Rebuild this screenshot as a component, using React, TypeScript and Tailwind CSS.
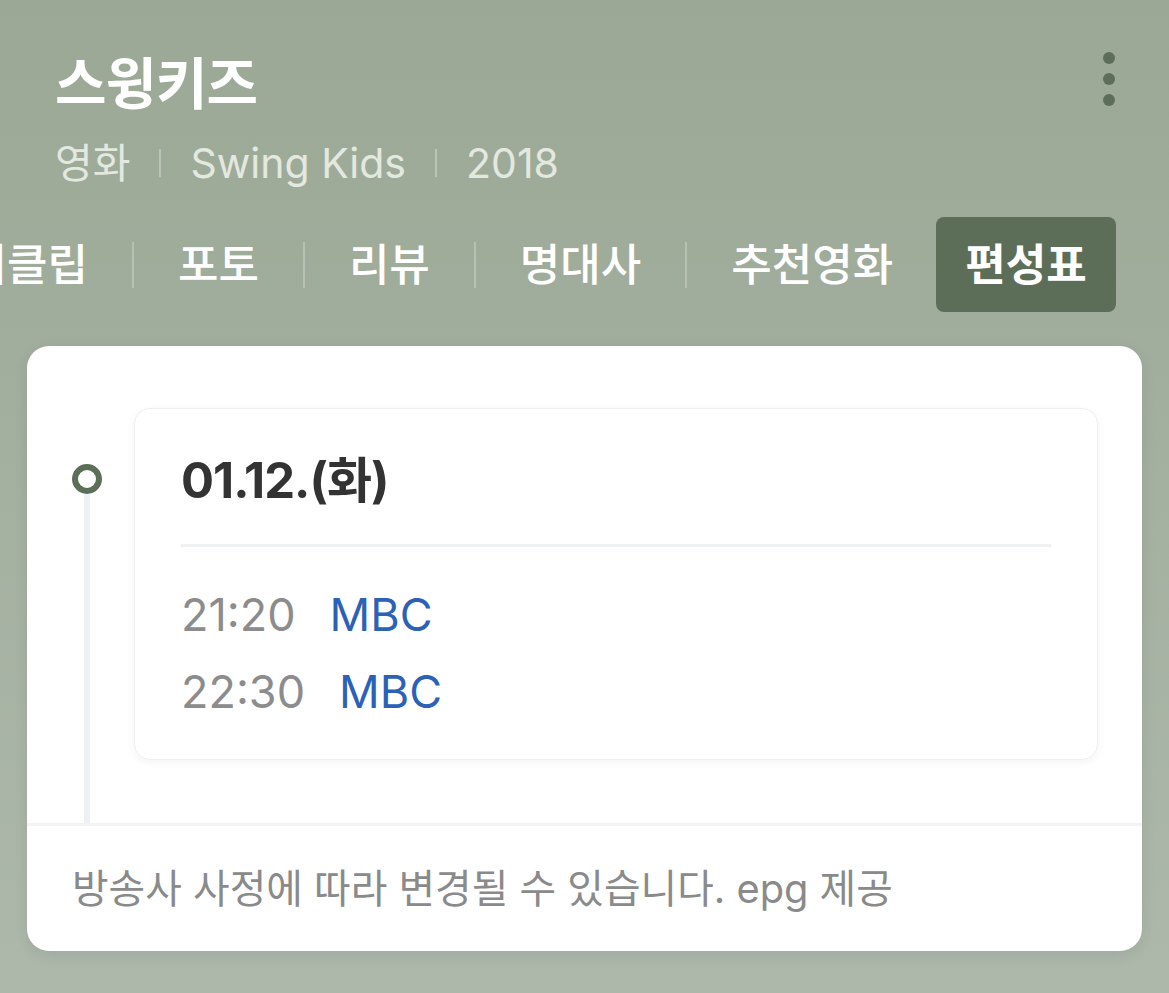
import React from 'react'

const TABS = ['티저클립', '포토', '리뷰', '명대사', '추천영화']

const SCHEDULE = [
  { time: '21:20', ch: 'MBC' },
  { time: '22:30', ch: 'MBC' },
]

const FONT = { fontFamily: 'Inter, "Noto Sans CJK KR", sans-serif' }

export default function App() {
  return (
    <div
      style={FONT}
      className="w-[1169px] h-[993px] overflow-hidden bg-gradient-to-b from-[#9ba895] to-[#adb8ab]"
    >
      {/* header */}
      <div className="flex justify-between pl-[55px] pr-[54px] pt-[52px]">
        <div>
          <h1 className="text-[56px] leading-[64px] font-bold text-white tracking-[-1px]">스윙키즈</h1>
          <div className="flex items-center mt-[22px] text-[41px] leading-[50px] text-[#e3e8e0]">
            <span>영화</span>
            <span className="w-[2px] h-[28px] bg-white/30 mx-[29px]" />
            <span>Swing Kids</span>
            <span className="w-[2px] h-[28px] bg-white/30 mx-[29px]" />
            <span>2018</span>
          </div>
        </div>
        <button className="flex flex-col gap-[9px] h-fit">
          <span className="w-[12px] h-[12px] rounded-full bg-[#5d6e58]" />
          <span className="w-[12px] h-[12px] rounded-full bg-[#5d6e58]" />
          <span className="w-[12px] h-[12px] rounded-full bg-[#5d6e58]" />
        </button>
      </div>

      {/* tabs, scrolled so the first one is partly hidden */}
      <div className="flex items-center ml-[-74px] mt-[29px] h-[95px] whitespace-nowrap text-[44px] text-white font-medium">
        {TABS.map((t, i) => (
          <React.Fragment key={t}>
            <span>{t}</span>
            {i < TABS.length - 1 && <span className="w-[2px] h-[46px] bg-white/25 mx-[44px]" />}
          </React.Fragment>
        ))}
        <span className="ml-[43px] h-[95px] px-[29px] flex items-center rounded-[8px] bg-[#5d6e58] font-bold">
          편성표
        </span>
      </div>

      {/* card */}
      <div className="mx-[27px] mt-[34px] bg-white rounded-[22px] shadow-[0_4px_14px_rgba(0,0,0,0.08)] overflow-hidden">
        <div className="flex pt-[62px] pr-[44px]">
          {/* timeline */}
          <div className="w-[107px] flex flex-col items-start pl-[45px] pt-[56px]">
            <span className="w-[30px] h-[30px] rounded-full border-[6px] border-[#5d6e58] bg-white" />
            <span className="w-[6px] flex-1 ml-[12px] bg-[#edf1f5]" />
          </div>
          <div className="flex-1 pb-[63px]">
            <div className="rounded-[16px] border border-[#efefef] shadow-[0_2px_8px_rgba(0,0,0,0.05)] px-[46px] pt-[42px] pb-[39px]">
              <div className="text-[49px] leading-[60px] font-bold text-[#333] tracking-[-1px]">01.12.(화)</div>
              <div className="h-[3px] bg-[#f0f1f3] mt-[33px] mb-[40px]" />
              <div className="flex flex-col gap-[21px]">
                {SCHEDULE.map((s) => (
                  <div key={s.time} className="text-[45px] leading-[56px]">
                    <span className="text-[#8c8c8c]">{s.time}</span>
                    <span className="text-[#2c62b6] ml-[34px]">{s.ch}</span>
                  </div>
                ))}
              </div>
            </div>
          </div>
        </div>
        <div className="h-[3px] bg-[#f1f3f6]" />
        <div className="h-[125px] flex items-center px-[45px] text-[39.8px] text-[#8a8a8a]">
          방송사 사정에 따라 변경될 수 있습니다. epg 제공
        </div>
      </div>
    </div>
  )
}
